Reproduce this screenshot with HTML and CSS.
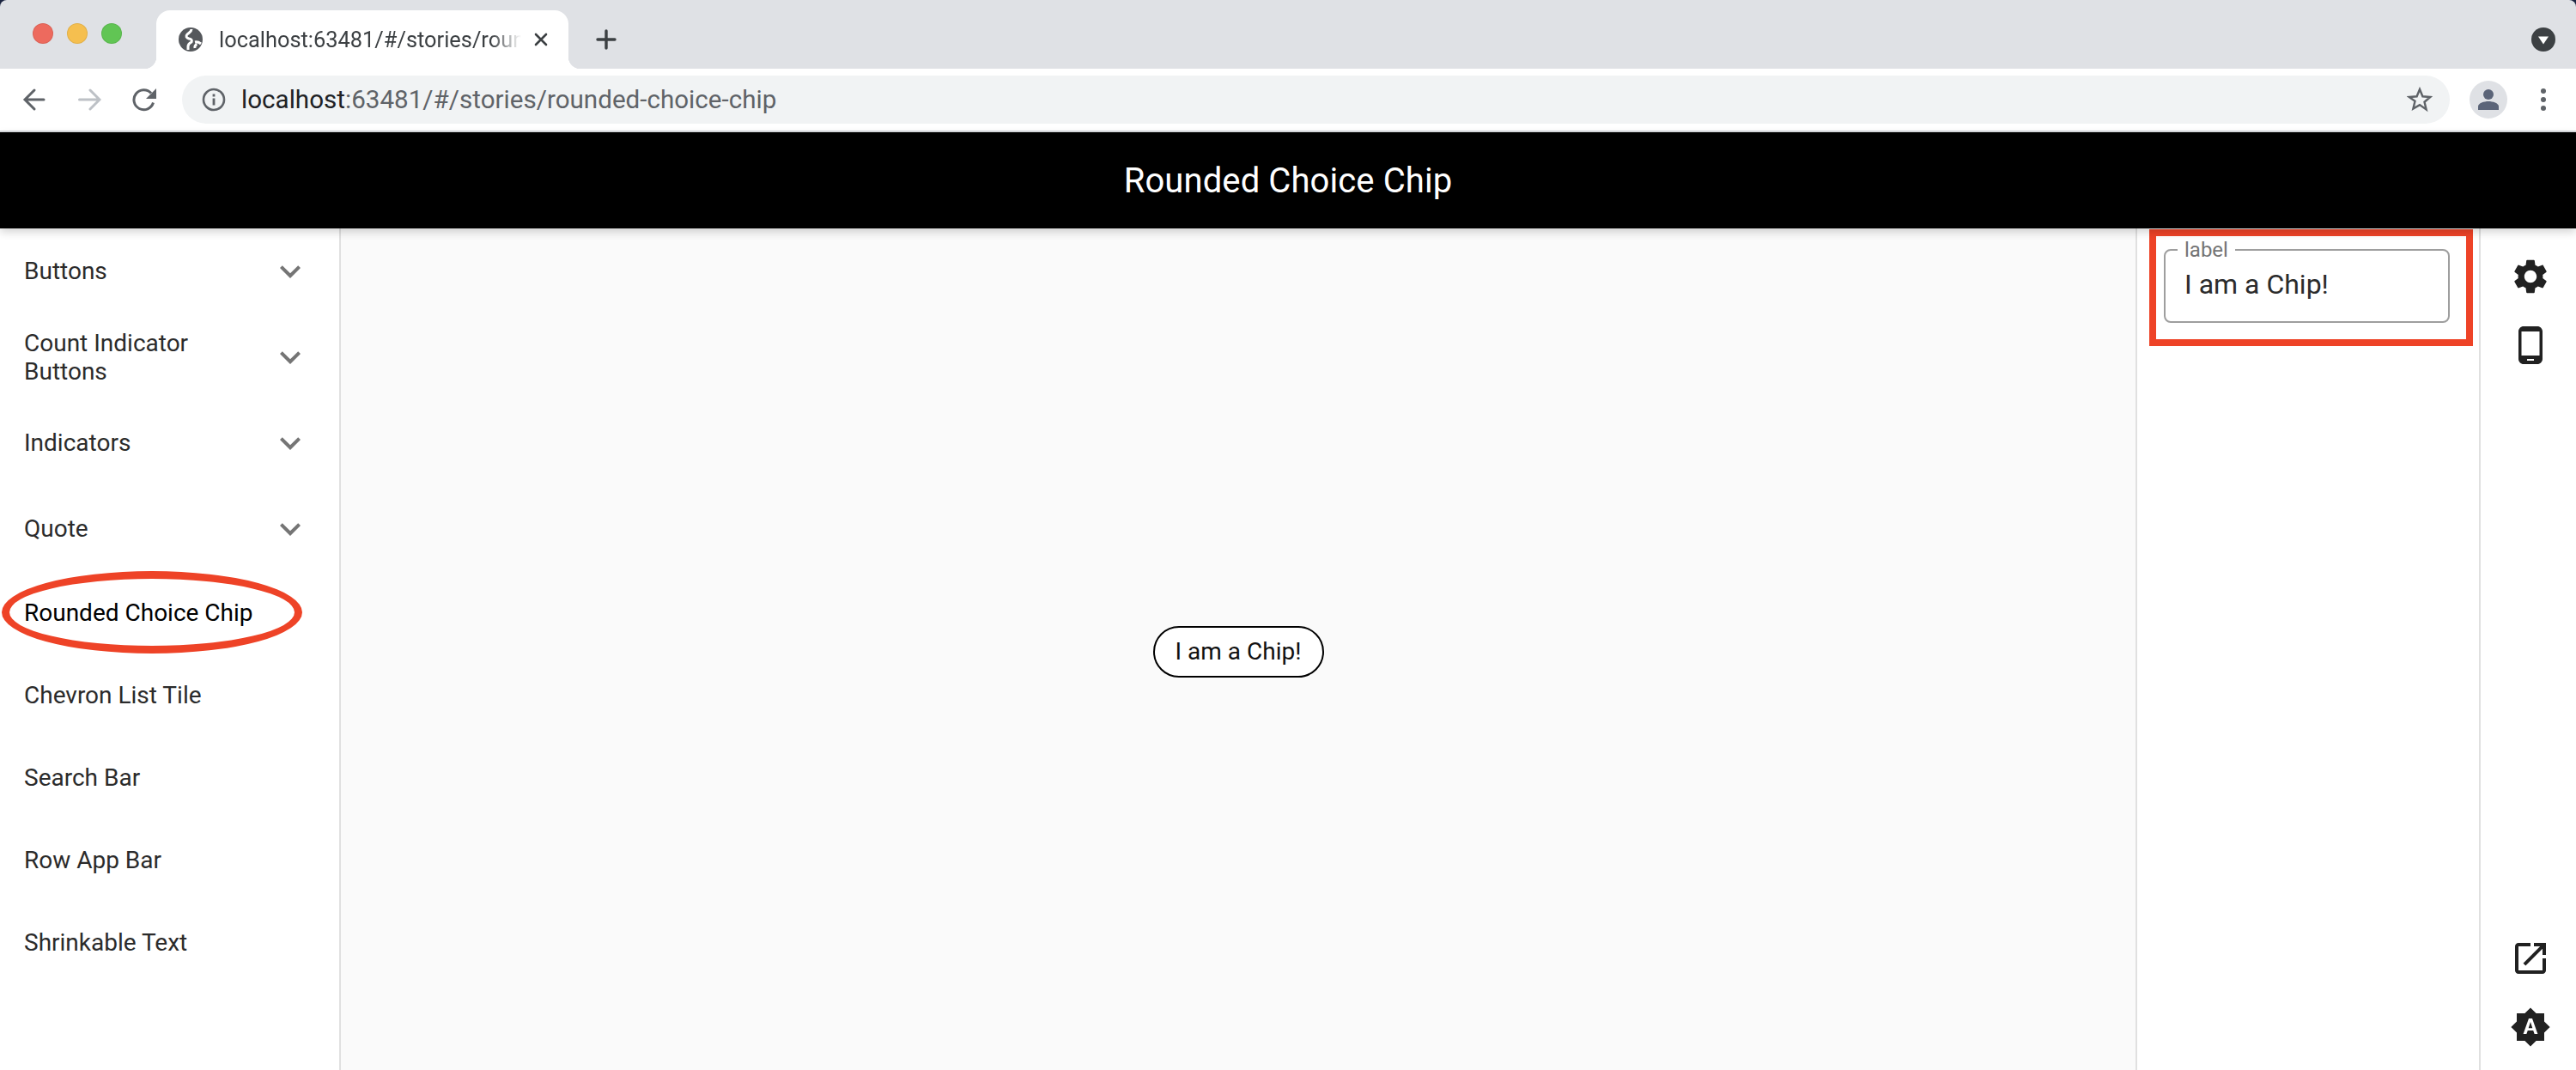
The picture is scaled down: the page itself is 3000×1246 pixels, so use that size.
FILE: index.html
```html
<!DOCTYPE html>
<html lang="en">
<head>
    <meta charset="UTF-8">
    <title>Rounded Choice Chip</title>
    <link rel="stylesheet" href="styles.css">
</head>
<body>

    <div class="tabstrip">
        <div class="lights">
            <span class="light red"></span>
            <span class="light yellow"></span>
            <span class="light green"></span>
        </div>
        <div class="tab">
            <svg class="globe" viewBox="0 0 28 28"><circle cx="14" cy="14" r="14" fill="#55585c"/><path d="M15 2c0 3-3 4-5 6-2 2-1 4 2 5 3 .5 4 2 3 4-2 1-4 2-4 5v4" stroke="#fff" stroke-width="3" fill="none"/><path d="M19 17c2-.5 5 .5 7 2M19 24c-.5-2 .5-4 2.500-4.500" stroke="#fff" stroke-width="3" fill="none"/></svg>
            <span class="tab-title">localhost:63481/#/stories/rounded-choice-chip</span>
            <svg class="tab-close" viewBox="0 0 16 16"><path d="M2 2l12 12M14 2L2 14" stroke="#3c4043" stroke-width="2.600" stroke-linecap="round" fill="none"/></svg>
        </div>
        <svg class="new-tab" viewBox="0 0 24 24"><path d="M12 2v20M2 12h20" stroke="#3c4043" stroke-width="3.400" stroke-linecap="round" fill="none"/></svg>
        <div class="tab-search">
            <svg viewBox="0 0 28 28"><circle cx="14" cy="14" r="14" fill="#3c4043"/><path d="M8 10.500h12L14 19.500z" fill="#fff"/></svg>
        </div>
    </div>

    <div class="toolbar">
        <svg class="nav-icon" viewBox="0 0 28 28"><path d="M25 14H3.500M14 3L3 14l11 11" stroke="#5f6368" stroke-width="3" stroke-linecap="round" fill="none"/></svg>
        <svg class="nav-icon forward" viewBox="0 0 28 28"><path d="M2.500 14H25M15 3l11 11-11 11" stroke="#bdc1c6" stroke-width="3" stroke-linecap="round" fill="none"/></svg>
        <svg class="nav-icon reload" viewBox="0 0 28 28"><path d="M24.500 17.500a11.500 11.500 0 1 1-2.500-11" stroke="#5f6368" stroke-width="3" fill="none"/><path d="M28 1v12H16z" fill="#5f6368"/></svg>
        <div class="omnibox">
            <svg class="info" viewBox="0 0 28 28"><circle cx="14" cy="14" r="12" stroke="#5f6368" stroke-width="2.600" fill="none"/><path d="M12.600 7.500h2.800v3h-2.800zM12.600 12.500h2.800v8h-2.800z" fill="#5f6368"/></svg>
            <span class="url"><span class="host">localhost</span>:63481/#/stories/rounded-choice-chip</span>
            <svg class="star" viewBox="0 0 30 30"><path d="M15 3l3.400 8.300 8.900.7-6.800 5.800 2.100 8.700L15 21.100l-7.600 4.400 2.100-8.700L2.700 12l8.900-.7z" stroke="#5f6368" stroke-width="2.400" fill="none"/></svg>
        </div>
        <div class="avatar">
            <svg viewBox="0 0 24 24"><circle cx="12" cy="6" r="6" fill="#5b6478"/><path d="M0 24v-4c0-4 7-6 12-6s12 2 12 6v4z" fill="#5b6478"/></svg>
        </div>
        <div class="menu-dots"><span></span><span></span><span></span></div>
    </div>

    <header class="appbar">Rounded Choice Chip</header>

    <div class="main">
        <nav class="sidebar">
            <div class="nav-row tall"><span>Buttons</span><svg class="chevron" viewBox="0 0 24 24"><path d="M16.590 8.590L12 13.170 7.410 8.590 6 10l6 6 6-6z"/></svg></div>
            <div class="nav-row tall"><span>Count Indicator<br>Buttons</span><svg class="chevron" viewBox="0 0 24 24"><path d="M16.590 8.590L12 13.170 7.410 8.590 6 10l6 6 6-6z"/></svg></div>
            <div class="nav-row tall"><span>Indicators</span><svg class="chevron" viewBox="0 0 24 24"><path d="M16.590 8.590L12 13.170 7.410 8.590 6 10l6 6 6-6z"/></svg></div>
            <div class="nav-row tall"><span>Quote</span><svg class="chevron" viewBox="0 0 24 24"><path d="M16.590 8.590L12 13.170 7.410 8.590 6 10l6 6 6-6z"/></svg></div>
            <div class="nav-row selected"><span>Rounded Choice Chip</span><div class="circled"></div></div>
            <div class="nav-row"><span>Chevron List Tile</span></div>
            <div class="nav-row"><span>Search Bar</span></div>
            <div class="nav-row"><span>Row App Bar</span></div>
            <div class="nav-row"><span>Shrinkable Text</span></div>
        </nav>

        <section class="canvas">
            <button class="chip">I am a Chip!</button>
        </section>

        <aside class="knobs">
            <div class="highlight">
                <fieldset class="field">
                    <legend>label</legend>
                    <span class="field-value">I am a Chip!</span>
                </fieldset>
            </div>
        </aside>

        <div class="rail">
            <svg class="rail-icon" viewBox="0 0 24 24"><path d="M19.140 12.940c.04-.3.06-.61.06-.94 0-.32-.02-.64-.07-.94l2.030-1.580c.18-.14.23-.41.12-.61l-1.920-3.320c-.12-.22-.37-.29-.59-.22l-2.390.96c-.5-.38-1.030-.7-1.620-.94l-.36-2.540c-.04-.24-.24-.41-.48-.41h-3.840c-.24 0-.43.17-.47.41l-.36 2.540c-.59.24-1.130.57-1.620.94l-2.390-.96c-.22-.08-.47 0-.59.22L2.740 8.870c-.12.21-.08.47.12.61l2.030 1.580c-.05.3-.09.63-.09.94s.02.64.07.94l-2.030 1.580c-.18.14-.23.41-.12.61l1.920 3.320c.12.22.37.29.59.22l2.390-.96c.5.38 1.030.7 1.620.94l.36 2.540c.05.24.24.41.48.41h3.840c.24 0 .44-.17.47-.41l.36-2.540c.59-.24 1.130-.56 1.620-.94l2.390.96c.22.08.47 0 .59-.22l1.920-3.320c.12-.22.07-.47-.12-.61l-2.010-1.580zM12 15.600c-1.980 0-3.600-1.620-3.600-3.600s1.620-3.600 3.600-3.600 3.600 1.620 3.600 3.600-1.620 3.600-3.600 3.600z"/></svg>
            <svg class="rail-icon" viewBox="0 0 24 24"><path d="M16 1H8C6.340 1 5 2.340 5 4v16c0 1.660 1.340 3 3 3h8c1.660 0 3-1.340 3-3V4c0-1.660-1.340-3-3-3zm-2 20h-4v-1h4v1zm3.250-3H6.750V4h10.500v14z"/></svg>
            <div class="rail-spacer"></div>
            <svg class="rail-icon" viewBox="0 0 24 24"><path d="M19 19H5V5h7V3H5c-1.110 0-2 .9-2 2v14c0 1.100.89 2 2 2h14c1.100 0 2-.9 2-2v-7h-2v7zM14 3v2h3.590l-9.830 9.830 1.410 1.410L19 6.410V10h2V3h-7z"/></svg>
            <svg class="rail-icon" viewBox="0 0 24 24"><path d="M10.850 12.650h2.300L12 9l-1.150 3.650zM20 8.690V4h-4.690L12 .69 8.690 4H4v4.690L.69 12 4 15.310V20h4.690L12 23.310 15.310 20H20v-4.690L23.310 12 20 8.690zM14.300 16l-.7-2h-3.200l-.7 2H7.800L11 7h2l3.200 9h-1.900z"/></svg>
        </div>
    </div>

</body>
</html>
```

FILE: styles.css
```css
html, body { margin: 0; padding: 0; }
body { width: 3000px; height: 1246px; overflow: hidden; display: flex; flex-direction: column; font-family: Roboto, sans-serif; color: #212121; background: #1b2440; }
svg { display: block; flex-shrink: 0; }

/* browser chrome */
.tabstrip { height: 80px; flex-shrink: 0; background: #dfe1e5; display: flex; align-items: flex-end; border-radius: 8px 8px 0 0; }
.lights { width: 182px; height: 68px; padding-left: 38px; box-sizing: border-box; display: flex; gap: 16px; padding-top: 15px; }
.light { width: 24px; height: 24px; border-radius: 50%; box-sizing: border-box; border: 1px solid rgba(0, 0, 0, .08); }
.red { background: #ed6a5e; }
.yellow { background: #f5bf4f; }
.green { background: #61c554; }
.tab { width: 480px; height: 68px; background: #fff; border-radius: 16px 16px 0 0; position: relative; display: flex; align-items: center; padding: 0 22px 0 26px; box-sizing: border-box; }
.tab::before, .tab::after { content: ""; position: absolute; bottom: 0; width: 14px; height: 14px; }
.tab::before { left: -14px; background: radial-gradient(circle at 0 0, transparent 14px, #fff 14.5px); }
.tab::after { right: -14px; background: radial-gradient(circle at 100% 0, transparent 14px, #fff 14.5px); }
.globe { width: 28px; height: 28px; margin-right: 19px; }
.tab-title { width: 352px; overflow: hidden; white-space: nowrap; font-size: 25.400px; color: #3c4043; -webkit-mask-image: linear-gradient(to right, #000 90%, transparent 100%); mask-image: linear-gradient(to right, #000 90%, transparent 100%); }
.tab-close { width: 16px; height: 16px; margin-left: 15px; }
.new-tab { width: 24px; height: 24px; margin: 0 0 22px 32px; }
.tab-search { margin-left: auto; margin-right: 24px; margin-bottom: 20px; }
.tab-search svg { width: 28px; height: 28px; }

.toolbar { height: 72px; flex-shrink: 0; background: #fff; display: flex; align-items: center; border-bottom: 2px solid #dadce0; }
.nav-icon { width: 28px; height: 28px; margin-left: 26px; }
.nav-icon.forward { margin-left: 36px; }
.nav-icon.reload { margin-left: 36px; margin-right: 30px; }
.omnibox { width: 2641px; height: 56px; background: #f1f3f4; border-radius: 28px; display: flex; align-items: center; padding: 0 20px 0 23px; box-sizing: border-box; }
.info { width: 28px; height: 28px; margin-right: 18px; }
.url { font-size: 29.600px; color: #5f6368; white-space: nowrap; }
.host { color: #202124; }
.star { width: 30px; height: 30px; margin-left: auto; }
.avatar { width: 44px; height: 44px; border-radius: 50%; background: #dfe1e5; margin-left: 23px; display: flex; align-items: center; justify-content: center; overflow: hidden; }
.avatar svg { width: 24px; height: 24px; }
.menu-dots { display: flex; flex-direction: column; gap: 4px; margin-left: 39px; }
.menu-dots span { width: 6px; height: 6px; border-radius: 50%; background: #5f6368; }

/* storybook */
.appbar { height: 112px; flex-shrink: 0; padding-top: 1px; box-sizing: border-box; background: #000; color: #fff; font-size: 40px; letter-spacing: .1px; display: flex; align-items: center; justify-content: center; box-shadow: 0 4px 10px rgba(0, 0, 0, .18); position: relative; z-index: 2; }
.main { flex: 1; display: flex; min-height: 0; background: #fff; }

.sidebar { width: 395px; flex-shrink: 0; border-right: 2px solid #e0e0e0; color: #2b2b2b; }
.nav-row { height: 96px; display: flex; align-items: center; justify-content: space-between; padding: 0 45px 2px 28px; box-sizing: border-box; font-size: 28px; line-height: 33px; position: relative; }
.nav-row.tall { height: 100px; padding-bottom: 1px; }
.nav-row.selected { color: #000; }
.chevron { width: 48px; height: 48px; fill: #757575; margin-right: -12px; }
.circled { position: absolute; left: 2px; top: -1px; width: 350px; height: 96px; border: 9px solid #ee4327; border-radius: 50%; box-sizing: border-box; }

.canvas { flex: 1; background: #fafafa; display: flex; align-items: center; justify-content: center; padding-top: 5px; box-sizing: border-box; }
.chip { height: 60px; width: 199px; padding: 0; background: #fff; border: 2px solid #000; border-radius: 30px; font-family: Roboto, sans-serif; font-size: 28px; color: #111; box-sizing: border-box; }

.knobs { width: 400px; flex-shrink: 0; box-sizing: border-box; border-left: 2px solid #e0e0e0; padding: 1px 7px 0 14px; }
.highlight { border: 8px solid #ee4327; padding: 2px 19px 0 9px; height: 136px; box-sizing: border-box; }
.field { margin: 0; padding: 0 0 0 22px; height: 99px; box-sizing: border-box; border: 2px solid #9e9e9e; border-radius: 8px; }
.field legend { font-size: 24px; line-height: 28px; color: #757575; padding: 0 8px; margin-left: -8px; }
.field-value { display: block; font-size: 32px; line-height: 40px; padding-top: 6px; color: #2b2b2b; }

.rail { width: 113px; flex-shrink: 0; box-sizing: border-box; border-left: 2px solid #e0e0e0; display: flex; flex-direction: column; align-items: center; padding: 32px 0 26px 5px; gap: 32px; }
.rail-icon { width: 48px; height: 48px; fill: #212121; }
.rail-spacer { flex: 1; }
```
